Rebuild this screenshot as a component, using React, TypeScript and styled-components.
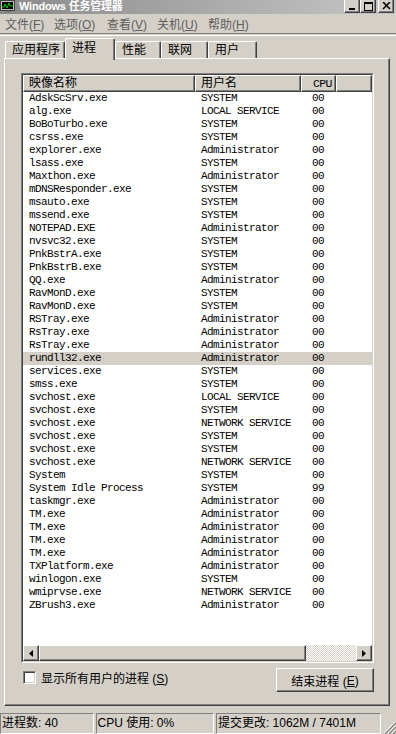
import React from 'react';
import styled, { createGlobalStyle, css } from 'styled-components';

const GlobalStyle = createGlobalStyle`
  html, body {
    margin: 0;
    padding: 0;
    background: #d4d0c8;
  }
  body {
    font-family: "Liberation Sans", "Noto Sans CJK SC", sans-serif;
    font-size: 12px;
    color: #000;
  }
`;

const raised = css`
  border-top: 1px solid #fff;
  border-left: 1px solid #fff;
  border-right: 1px solid #404040;
  border-bottom: 1px solid #404040;
  box-shadow: inset -1px -1px 0 #808080;
`;

const Window = styled.div`
  width: 396px;
  height: 734px;
  display: flex;
  flex-direction: column;
  background: #d4d0c8;
  overflow: hidden;
`;

const TitleBar = styled.div`
  height: 14px;
  display: flex;
  align-items: flex-start;
  background: linear-gradient(to right, #8a8a8a, #c6c6c6);
`;

const TitleText = styled.div`
  margin-left: 4px;
  color: #fff;
  font-weight: bold;
  font-size: 11px;
  line-height: 13px;
  letter-spacing: -0.2px;
  white-space: nowrap;
`;

const TitleButtons = styled.div`
  margin-left: auto;
  display: flex;
  padding-right: 2px;
`;

const TitleButton = styled.div<{ $gap?: boolean }>`
  box-sizing: border-box;
  width: 16px;
  height: 13px;
  margin-left: ${(p) => (p.$gap ? 2 : 0)}px;
  background: #d4d0c8;
  ${raised};
  border-top: none;
  display: flex;
  align-items: center;
  justify-content: center;
`;

const MenuBar = styled.div`
  height: 19px;
  display: flex;
  align-items: center;
  padding-left: 5px;
  color: #5e5e5e;
`;

const MenuItem = styled.div<{ $w: number }>`
  width: ${(p) => p.$w}px;
  white-space: nowrap;
`;

const Separator = styled.div`
  height: 1px;
  border-top: 1px solid #808080;
  border-bottom: 1px solid #fff;
`;

const TabStrip = styled.div`
  height: 22px;
  display: flex;
  align-items: flex-end;
  padding-left: 5px;
  position: relative;
  z-index: 2;
`;

const Tab = styled.div<{ $w: number; $active?: boolean }>`
  box-sizing: border-box;
  width: ${(p) => p.$w}px;
  height: ${(p) => (p.$active ? 22 : 17)}px;
  margin-bottom: ${(p) => (p.$active ? -2 : 0)}px;
  background: #d4d0c8;
  border-top: 1px solid #fff;
  border-left: 1px solid #fff;
  border-right: 1px solid #404040;
  border-radius: 2px 2px 0 0;
  box-shadow: inset -1px 0 0 #808080;
  padding: ${(p) => (p.$active ? '2px 0 0 6px' : '1px 0 0 6px')};
  line-height: 14px;
  white-space: nowrap;
`;

const Panel = styled.div`
  box-sizing: border-box;
  margin-left: 4px;
  width: 386px;
  height: 648px;
  ${raised};
  padding: 14px 15px 0 16px;
  display: flex;
  flex-direction: column;
`;

const ListFrame = styled.div`
  height: 590px;
  box-sizing: border-box;
  border-top: 1px solid #808080;
  border-left: 1px solid #808080;
  border-right: 1px solid #fff;
  border-bottom: 1px solid #fff;
`;

const ListBody = styled.div`
  height: 100%;
  box-sizing: border-box;
  border-top: 1px solid #404040;
  border-left: 1px solid #404040;
  border-right: 1px solid #d4d0c8;
  border-bottom: 1px solid #d4d0c8;
  background: #fff;
  display: flex;
  flex-direction: column;
`;

const HeaderRow = styled.div`
  display: flex;
  height: 17px;
  background: #d4d0c8;
`;

const HeaderCell = styled.div<{ $w?: number; $pad: number; $mono?: boolean }>`
  box-sizing: border-box;
  ${(p) => (p.$w ? `width: ${p.$w}px;` : 'flex: 1;')}
  ${raised};
  padding-left: ${(p) => p.$pad}px;
  line-height: 15px;
  ${(p) =>
    p.$mono &&
    css`
      font-family: "Liberation Mono", monospace;
      font-size: 11.5px;
      letter-spacing: -0.6px;
    `}
`;

const Rows = styled.div`
  display: flex;
  flex-direction: column;
  flex: 1;
`;

const Row = styled.div<{ $selected?: boolean }>`
  display: flex;
  height: 13px;
  line-height: 13px;
  font-family: "Liberation Mono", "Noto Sans CJK SC", monospace;
  font-size: 11px;
  letter-spacing: -0.6px;
  color: #000;
  background: ${(p) => (p.$selected ? '#d4d0c8' : 'transparent')};
  white-space: nowrap;
`;

const Cell = styled.div<{ $w: number; $pad: number }>`
  width: ${(p) => p.$w}px;
  padding-left: ${(p) => p.$pad}px;
  box-sizing: border-box;
`;

const HScroll = styled.div`
  height: 16px;
  display: flex;
`;

const ScrollButton = styled.div`
  box-sizing: border-box;
  width: 16px;
  height: 16px;
  background: #d4d0c8;
  ${raised};
  display: flex;
  align-items: center;
  justify-content: center;
`;

const Thumb = styled.div`
  box-sizing: border-box;
  width: 267px;
  height: 16px;
  background: #d4d0c8;
  ${raised};
`;

const Track = styled.div`
  flex: 1;
  background-image: repeating-conic-gradient(#fff 0 25%, #d4d0c8 0 50%);
  background-size: 2px 2px;
`;

const Controls = styled.div`
  margin-top: 5px;
  display: flex;
  align-items: center;
  justify-content: space-between;
`;

const CheckLabel = styled.label`
  display: flex;
  align-items: center;
  gap: 5px;
  margin-left: 2px;
  margin-top: -6px;
`;

const CheckBox = styled.span`
  box-sizing: border-box;
  width: 13px;
  height: 13px;
  background: #fff;
  border-top: 1px solid #808080;
  border-left: 1px solid #808080;
  border-right: 1px solid #fff;
  border-bottom: 1px solid #fff;
  box-shadow: inset 1px 1px 0 #404040, inset -1px -1px 0 #d4d0c8;
`;

const Button = styled.div`
  box-sizing: border-box;
  width: 98px;
  height: 24px;
  ${raised};
  display: flex;
  align-items: center;
  justify-content: center;
  padding-top: 1px;
`;

const StatusBar = styled.div`
  margin-top: 6px;
  height: 22px;
  display: flex;
  align-items: flex-end;
  gap: 2px;
`;

const StatusPane = styled.div<{ $w: number }>`
  box-sizing: border-box;
  width: ${(p) => p.$w}px;
  height: 21px;
  border-top: 1px solid #808080;
  border-left: 1px solid #808080;
  border-right: 1px solid #fff;
  border-bottom: 1px solid #fff;
  padding-left: 1px;
  line-height: 19px;
  white-space: nowrap;
`;

const Grip = styled.div`
  margin-left: auto;
  width: 13px;
  height: 13px;
  align-self: flex-end;
`;

const Key = styled.span`
  text-decoration: underline;
`;

const processes: [string, string, string][] = [
  ['AdskScSrv.exe', 'SYSTEM', '00'],
  ['alg.exe', 'LOCAL SERVICE', '00'],
  ['BoBoTurbo.exe', 'SYSTEM', '00'],
  ['csrss.exe', 'SYSTEM', '00'],
  ['explorer.exe', 'Administrator', '00'],
  ['lsass.exe', 'SYSTEM', '00'],
  ['Maxthon.exe', 'Administrator', '00'],
  ['mDNSResponder.exe', 'SYSTEM', '00'],
  ['msauto.exe', 'SYSTEM', '00'],
  ['mssend.exe', 'SYSTEM', '00'],
  ['NOTEPAD.EXE', 'Administrator', '00'],
  ['nvsvc32.exe', 'SYSTEM', '00'],
  ['PnkBstrA.exe', 'SYSTEM', '00'],
  ['PnkBstrB.exe', 'SYSTEM', '00'],
  ['QQ.exe', 'Administrator', '00'],
  ['RavMonD.exe', 'SYSTEM', '00'],
  ['RavMonD.exe', 'SYSTEM', '00'],
  ['RSTray.exe', 'Administrator', '00'],
  ['RsTray.exe', 'Administrator', '00'],
  ['RsTray.exe', 'Administrator', '00'],
  ['rundll32.exe', 'Administrator', '00'],
  ['services.exe', 'SYSTEM', '00'],
  ['smss.exe', 'SYSTEM', '00'],
  ['svchost.exe', 'LOCAL SERVICE', '00'],
  ['svchost.exe', 'SYSTEM', '00'],
  ['svchost.exe', 'NETWORK SERVICE', '00'],
  ['svchost.exe', 'SYSTEM', '00'],
  ['svchost.exe', 'SYSTEM', '00'],
  ['svchost.exe', 'NETWORK SERVICE', '00'],
  ['System', 'SYSTEM', '00'],
  ['System Idle Process', 'SYSTEM', '99'],
  ['taskmgr.exe', 'Administrator', '00'],
  ['TM.exe', 'Administrator', '00'],
  ['TM.exe', 'Administrator', '00'],
  ['TM.exe', 'Administrator', '00'],
  ['TM.exe', 'Administrator', '00'],
  ['TXPlatform.exe', 'Administrator', '00'],
  ['winlogon.exe', 'SYSTEM', '00'],
  ['wmiprvse.exe', 'NETWORK SERVICE', '00'],
  ['ZBrush3.exe', 'Administrator', '00'],
];

const menus: [string, string, number][] = [
  ['文件', 'F', 49],
  ['选项', 'O', 53],
  ['查看', 'V', 50],
  ['关机', 'U', 51],
  ['帮助', 'H', 50],
];

const tabs: [string, number][] = [
  ['应用程序', 60],
  ['进程', 50],
  ['性能', 46],
  ['联网', 47],
  ['用户', 49],
];

const AppIcon = () => (
  <svg width="15" height="13" viewBox="0 0 15 13">
    <rect x="0.5" y="0.5" width="14" height="10" fill="#c0c0c0" stroke="#404040" />
    <rect x="2" y="2" width="11" height="7" fill="#000" />
    <polyline points="2,7 4,7 5,4 7,8 9,3 10,6 13,6" fill="none" stroke="#00d000" strokeWidth="1" />
    <rect x="4" y="11" width="7" height="2" fill="#808080" />
  </svg>
);

const App: React.FC = () => {
  return (
    <>
      <GlobalStyle />
      <Window>
        <TitleBar>
          <AppIcon />
          <TitleText>Windows 任务管理器</TitleText>
          <TitleButtons>
            <TitleButton>
              <svg width="8" height="9" viewBox="0 0 8 9">
                <rect x="1" y="6" width="6" height="2" fill="#000" />
              </svg>
            </TitleButton>
            <TitleButton>
              <svg width="10" height="9" viewBox="0 0 10 9">
                <rect x="1.5" y="0.5" width="8" height="8" fill="none" stroke="#000" />
                <rect x="1" y="1" width="9" height="1" fill="#000" />
              </svg>
            </TitleButton>
            <TitleButton $gap>
              <svg width="9" height="8" viewBox="0 0 9 8">
                <path d="M1 0 L8 7 M8 0 L1 7" stroke="#000" strokeWidth="1.6" />
              </svg>
            </TitleButton>
          </TitleButtons>
        </TitleBar>
        <MenuBar>
          {menus.map(([label, key, w]) => (
            <MenuItem key={key} $w={w}>
              {label}(<Key>{key}</Key>)
            </MenuItem>
          ))}
        </MenuBar>
        <Separator />
        <TabStrip>
          {tabs.map(([label, w], i) => (
            <Tab key={label} $w={w} $active={i === 1}>
              {label}
            </Tab>
          ))}
        </TabStrip>
        <Panel>
          <ListFrame>
            <ListBody>
              <HeaderRow>
                <HeaderCell $w={172} $pad={5}>映像名称</HeaderCell>
                <HeaderCell $w={106} $pad={5}>用户名</HeaderCell>
                <HeaderCell $w={35} $pad={11} $mono>CPU</HeaderCell>
                <HeaderCell $pad={0} />
              </HeaderRow>
              <Rows>
                {processes.map(([name, user, cpu], i) => (
                  <Row key={i} $selected={i === 20}>
                    <Cell $w={172} $pad={6}>{name}</Cell>
                    <Cell $w={106} $pad={6}>{user}</Cell>
                    <Cell $w={35} $pad={11}>{cpu}</Cell>
                  </Row>
                ))}
              </Rows>
              <HScroll>
                <ScrollButton>
                  <svg width="4" height="7" viewBox="0 0 4 7">
                    <path d="M4 0 L0 3.5 L4 7 Z" fill="#000" />
                  </svg>
                </ScrollButton>
                <Thumb />
                <Track />
                <ScrollButton>
                  <svg width="4" height="7" viewBox="0 0 4 7">
                    <path d="M0 0 L4 3.5 L0 7 Z" fill="#000" />
                  </svg>
                </ScrollButton>
              </HScroll>
            </ListBody>
          </ListFrame>
          <Controls>
            <CheckLabel>
              <CheckBox />
              <span>
                显示所有用户的进程 (<Key>S</Key>)
              </span>
            </CheckLabel>
            <Button>
              结束进程 (<Key>E</Key>)
            </Button>
          </Controls>
        </Panel>
        <StatusBar>
          <StatusPane $w={94}>进程数: 40</StatusPane>
          <StatusPane $w={119}>CPU 使用: 0%</StatusPane>
          <StatusPane $w={166}>提交更改: 1062M / 7401M</StatusPane>
          <Grip>
            <svg width="13" height="13" viewBox="0 0 13 13">
              <path d="M12 1 L1 12 M12 5 L5 12 M12 9 L9 12" stroke="#fff" strokeWidth="1" />
              <path d="M13 2 L2 13 M13 6 L6 13 M13 10 L10 13" stroke="#808080" strokeWidth="1.2" />
            </svg>
          </Grip>
        </StatusBar>
      </Window>
    </>
  );
};

export default App;
